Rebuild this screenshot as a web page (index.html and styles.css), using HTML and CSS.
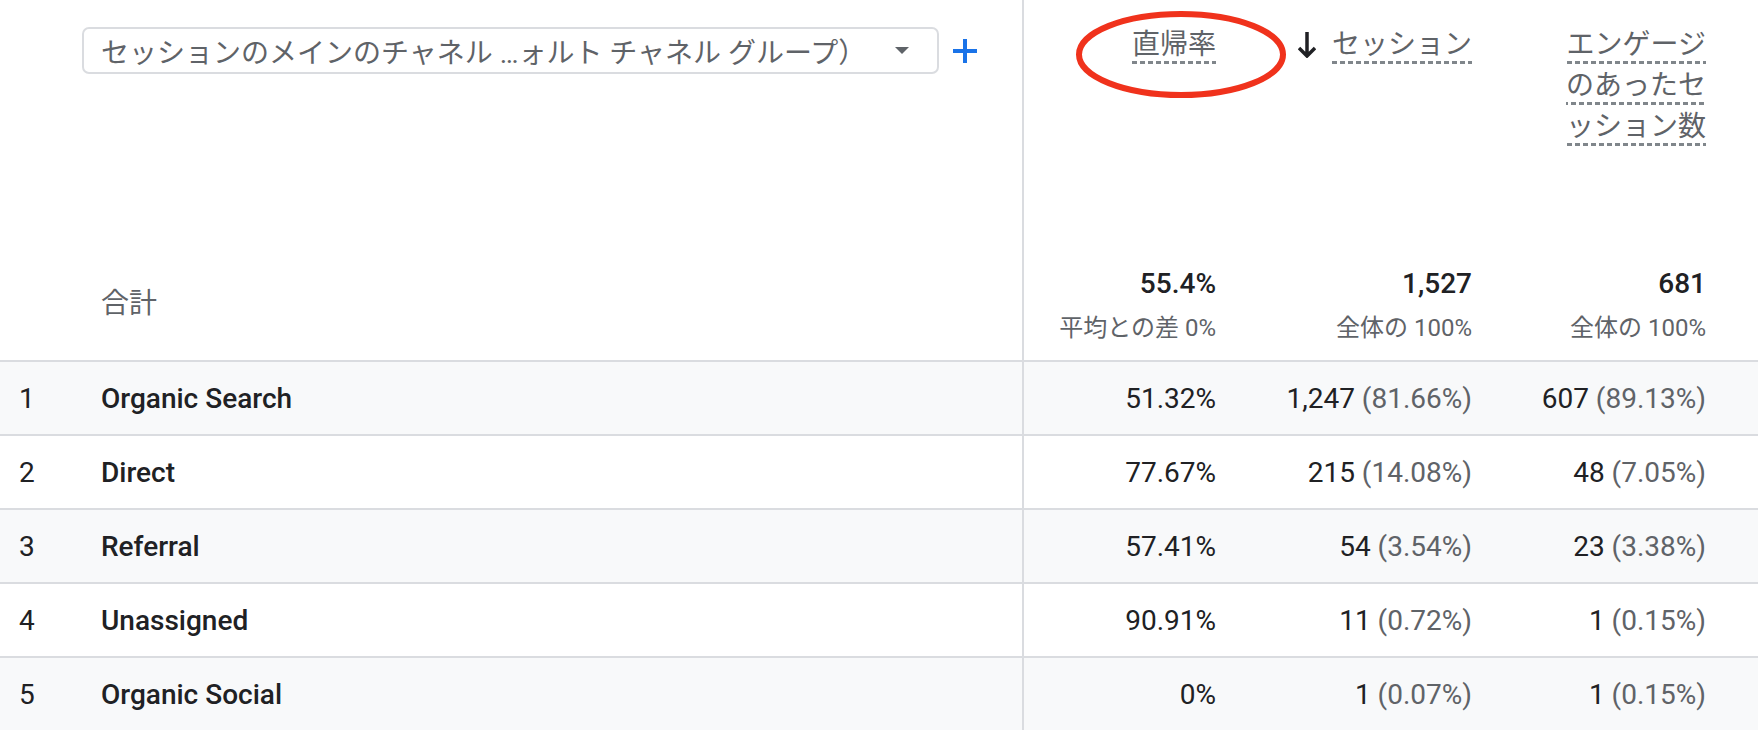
FILE: index.html
```html
<!DOCTYPE html>
<html lang="ja">
<head>
    <meta charset="UTF-8">
    <meta name="viewport" content="width=device-width, initial-scale=1.0">
    <title>レポート</title>
    <link rel="stylesheet" href="styles.css">
</head>
<body>
    <div class="report">
        <div class="row head">
            <div class="cell idx"></div>
            <div class="cell dim head-dim">
                <div class="picker">
                    <div class="select">
                        <span class="select-text">セッションのメインのチャネル …ォルト チャネル グループ）</span>
                        <span class="caret"></span>
                    </div>
                    <svg class="add" width="24" height="24" viewBox="0 0 24 24">
                        <path d="M12 0v24M0 12h24" stroke="#1a73e8" stroke-width="4" fill="none"/>
                    </svg>
                </div>
                <div class="total-label">合計</div>
            </div>
            <div class="cell metric head-metric first">
                <svg class="mark" width="210" height="87" viewBox="0 0 210 87">
                    <ellipse cx="105" cy="43.5" rx="102" ry="40.5" fill="none" stroke="#f0321c" stroke-width="6"/>
                </svg>
                <div class="label-wrap">
                    <div class="label"><span>直帰率</span></div>
                </div>
                <div class="total">
                    <div class="total-value">55.4%</div>
                    <div class="total-sub">平均との差 0%</div>
                </div>
            </div>
            <div class="cell metric head-metric">
                <div class="label-wrap">
                    <svg class="sort" width="18" height="26" viewBox="0 0 18 26">
                        <path d="M9 0v24M1 16l8 8 8-8" stroke="#202124" stroke-width="3.5" fill="none"/>
                    </svg>
                    <div class="label"><span>セッション</span></div>
                </div>
                <div class="total">
                    <div class="total-value">1,527</div>
                    <div class="total-sub">全体の 100%</div>
                </div>
            </div>
            <div class="cell metric head-metric last">
                <div class="label-wrap">
                    <div class="label"><span>エンゲージのあったセッション数</span></div>
                </div>
                <div class="total">
                    <div class="total-value">681</div>
                    <div class="total-sub">全体の 100%</div>
                </div>
            </div>
        </div>

        <div class="row data odd">
            <div class="cell idx">1</div>
            <div class="cell dim">Organic Search</div>
            <div class="cell metric first">51.32%</div>
            <div class="cell metric">1,247 <span class="pct">(81.66%)</span></div>
            <div class="cell metric last">607 <span class="pct">(89.13%)</span></div>
        </div>
        <div class="row data">
            <div class="cell idx">2</div>
            <div class="cell dim">Direct</div>
            <div class="cell metric first">77.67%</div>
            <div class="cell metric">215 <span class="pct">(14.08%)</span></div>
            <div class="cell metric last">48 <span class="pct">(7.05%)</span></div>
        </div>
        <div class="row data odd">
            <div class="cell idx">3</div>
            <div class="cell dim">Referral</div>
            <div class="cell metric first">57.41%</div>
            <div class="cell metric">54 <span class="pct">(3.54%)</span></div>
            <div class="cell metric last">23 <span class="pct">(3.38%)</span></div>
        </div>
        <div class="row data">
            <div class="cell idx">4</div>
            <div class="cell dim">Unassigned</div>
            <div class="cell metric first">90.91%</div>
            <div class="cell metric">11 <span class="pct">(0.72%)</span></div>
            <div class="cell metric last">1 <span class="pct">(0.15%)</span></div>
        </div>
        <div class="row data odd">
            <div class="cell idx">5</div>
            <div class="cell dim">Organic Social</div>
            <div class="cell metric first">0%</div>
            <div class="cell metric">1 <span class="pct">(0.07%)</span></div>
            <div class="cell metric last">1 <span class="pct">(0.15%)</span></div>
        </div>
    </div>
</body>
</html>
```

FILE: styles.css
```css
* {
    margin: 0;
    padding: 0;
    box-sizing: border-box;
}

body {
    font-family: Roboto, "Noto Sans CJK JP", sans-serif;
    font-size: 28px;
    color: #202124;
    background: #fff;
}

.report {
    width: 1758px;
}

.row {
    display: grid;
    grid-template-columns: 82px 1fr 218px 256px 262px;
}

/* header */
.head {
    height: 362px;
    border-bottom: 2px solid #dadce0;
}

.head .cell {
    display: flex;
    flex-direction: column;
    justify-content: space-between;
}

.head-dim {
    padding-top: 27px;
    padding-bottom: 36px;
}

.picker {
    display: flex;
    align-items: center;
}

.select {
    width: 857px;
    height: 47px;
    border: 2px solid #dadce0;
    border-radius: 7px;
    display: flex;
    align-items: center;
    padding-left: 17px;
    padding-right: 28px;
    color: #5f6368;
}

.select-text {
    flex: 1;
    white-space: nowrap;
    overflow: hidden;
}

.caret {
    width: 0;
    height: 0;
    border-left: 7px solid transparent;
    border-right: 7px solid transparent;
    border-top: 7px solid #5f6368;
}

.add {
    margin-left: 14px;
}

.total-label {
    padding-left: 19px;
    line-height: 40px;
    color: #5f6368;
}

.head-metric {
    position: relative;
    padding-top: 24px;
    padding-bottom: 16px;
}

.mark {
    position: absolute;
    left: 52px;
    top: 11px;
}

.label-wrap {
    display: flex;
    justify-content: flex-end;
    align-items: flex-start;
    gap: 16px;
}

.sort {
    margin-top: 8px;
}

.label {
    max-width: 150px;
    text-align: right;
    line-height: 41px;
    line-break: anywhere;
    color: #5f6368;
}

.label span {
    padding-bottom: 3px;
    background-image: linear-gradient(to right, #80868b 5px, transparent 5px);
    background-size: 8px 3px;
    background-repeat: repeat-x;
    background-position: 0 100%;
}

.total {
    text-align: right;
}

.total-value {
    font-weight: 500;
    line-height: 32px;
}

.total-sub {
    margin-top: 12px;
    font-size: 24px;
    line-height: 32px;
    color: #5f6368;
}

/* cells */
.cell.first {
    border-left: 2px solid #dadce0;
}

.metric {
    padding-right: 24px;
}

.metric.last {
    padding-right: 52px;
}

/* body rows */
.data {
    height: 74px;
    border-bottom: 2px solid #dadce0;
}

.data:last-child {
    height: 72px;
    border-bottom: none;
}

.data.odd {
    background: #f8f9fa;
}

.data .cell {
    display: flex;
    align-items: center;
}

.data .idx {
    padding-left: 19px;
}

.data .dim {
    padding-left: 19px;
    font-weight: 500;
}

.data .metric {
    justify-content: flex-end;
    white-space: pre;
}

.pct {
    color: #5f6368;
}
```
